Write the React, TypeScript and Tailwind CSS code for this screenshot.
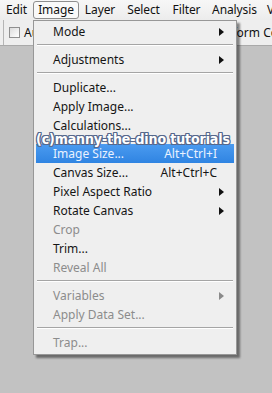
import React from "react";

type Item =
  | { kind: "sep" }
  | { kind: "gap" }
  | { kind: "item"; label: string; sub?: boolean; shortcut?: string; disabled?: boolean; active?: boolean };

const items: Item[] = [
  { kind: "item", label: "Mode", sub: true },
  { kind: "sep" },
  { kind: "item", label: "Adjustments", sub: true },
  { kind: "sep" },
  { kind: "item", label: "Duplicate..." },
  { kind: "item", label: "Apply Image..." },
  { kind: "item", label: "Calculations..." },
  { kind: "gap" },
  { kind: "item", label: "Image Size...", shortcut: "Alt+Ctrl+I", active: true },
  { kind: "item", label: "Canvas Size...", shortcut: "Alt+Ctrl+C" },
  { kind: "item", label: "Pixel Aspect Ratio", sub: true },
  { kind: "item", label: "Rotate Canvas", sub: true },
  { kind: "item", label: "Crop", disabled: true },
  { kind: "item", label: "Trim..." },
  { kind: "item", label: "Reveal All", disabled: true },
  { kind: "sep" },
  { kind: "item", label: "Variables", sub: true, disabled: true },
  { kind: "item", label: "Apply Data Set...", disabled: true },
  { kind: "sep" },
  { kind: "item", label: "Trap...", disabled: true },
];

const topMenus = [
  { label: "Edit", w: "w-[33px]" },
  { label: "Image", w: "w-[46px]" },
  { label: "Layer", w: "w-[42px]" },
  { label: "Select", w: "w-[45px]" },
  { label: "Filter", w: "w-[41px]" },
  { label: "Analysis", w: "w-[55px]" },
];

function Arrow({ dim }: { dim?: boolean }) {
  return (
    <svg width="5" height="8" viewBox="0 0 5 8" className="shrink-0">
      <path d="M0 0 L5 4 L0 8 Z" fill={dim ? "#8a8a8a" : "#111"} />
    </svg>
  );
}

export default function App() {
  return (
    <div
      className="relative w-[272px] h-[393px] overflow-hidden bg-[#c2c2c2]"
      style={{ fontFamily: '"Noto Sans", "Open Sans", sans-serif' }}
    >
      {/* menu bar */}
      <div className="flex h-[20px] items-center bg-gradient-to-b from-[#f7f7f7] to-[#ececec] text-[12px] tracking-[-0.1px] text-[#111]">
        {topMenus.map((m) => (
          <div
            key={m.label}
            className={`${m.w} flex h-[18px] shrink-0 items-center justify-center rounded-[3px] ${
              m.label === "Image" ? "border border-[#8e8e8e] bg-[#f9f9f9]" : ""
            }`}
          >
            {m.label}
          </div>
        ))}
        <div className="ml-[5px] shrink-0 whitespace-nowrap">View</div>
      </div>

      {/* options bar */}
      <div className="flex h-[26px] items-center border-b border-[#a9a9a9] bg-[#eeeeee] text-[12px] text-[#111]">
        <div className="ml-[3px] h-full w-px bg-[#b5b5b5]" />
        <div className="ml-[5px] h-[11px] w-[11px] border border-[#8f8f8f] bg-gradient-to-br from-[#dcdcdc] to-white" />
        <span className="ml-[4px]">Au</span>
        <span className="ml-auto whitespace-nowrap translate-x-[6px]">form Co</span>
      </div>

      {/* dropdown */}
      <div className="absolute left-[33px] top-[20px] w-[204px] border border-[#979797] bg-[#efefef] pt-px pb-[2px] text-[12px] shadow-[3px_3px_2px_rgba(0,0,0,0.45)]">
        {items.map((it, i) => {
          if (it.kind === "sep")
            return (
              <div key={i} className="h-[9px] px-[3px] pt-[3px]">
                <div className="h-px bg-[#a5a5a5] shadow-[0_1px_0_#ffffff]" />
              </div>
            );
          if (it.kind === "gap") return <div key={i} className="h-[9px]" />;
          return (
            <div
              key={i}
              className={`mx-[2px] flex h-[19px] items-center pl-[17px] pr-[10px] ${
                it.active ? "bg-gradient-to-b from-[#4b9bf0] to-[#2f84e2] text-[#eaf2ff]" : ""
              } ${it.disabled ? "text-[#8c8c8c]" : it.active ? "" : "text-[#151515]"}`}
            >
              <span className="flex-1 whitespace-nowrap">{it.label}</span>
              {it.shortcut && <span className="pr-[7px] whitespace-nowrap">{it.shortcut}</span>}
              {it.sub && <Arrow dim={it.disabled} />}
            </div>
          );
        })}
      </div>

      {/* watermark */}
      <div
        className="absolute left-[36px] top-[131px] whitespace-nowrap text-[14px] font-bold leading-[17px] tracking-[-0.1px] text-white"
        style={{
          fontFamily: '"DejaVu Sans Condensed", "DejaVu Sans", sans-serif',
          fontStretch: "condensed",
          textShadow:
            "1px 0 0 #56688c, -1px 0 0 #56688c, 0 1px 0 #56688c, 0 -1px 0 #56688c, 1px 1px 0 #56688c, -1px -1px 0 #56688c, 1px -1px 0 #56688c, -1px 1px 0 #56688c",
        }}
      >
        (c)manny-the-dino tutorials
      </div>
    </div>
  );
}
